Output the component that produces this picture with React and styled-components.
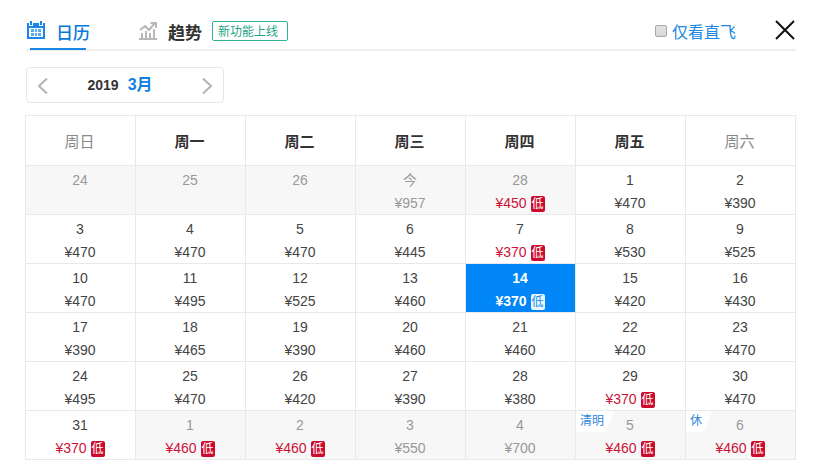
import React, { useState } from "react";
import styled, { createGlobalStyle, css } from "styled-components";

const GlobalStyle = createGlobalStyle`
  *, *::before, *::after { box-sizing: border-box; }
  body {
    margin: 0;
    background: #fff;
    color: #333;
    font-family: "Liberation Sans", "Noto Sans CJK SC", sans-serif;
    font-size: 14px;
  }
  button, input { font: inherit; color: inherit; }
  button { border: 0; padding: 0; background: none; cursor: pointer; }
`;

const Panel = styled.main`
  padding: 13px 25px 16px;
`;

const Header = styled.header`
  display: flex;
  align-items: center;
  height: 38px;
  margin-left: 1px;
  border-bottom: 2px solid #eee;
`;

const Tab = styled.button`
  position: relative;
  display: flex;
  align-items: center;
  gap: 10px;
  height: 38px;
  margin-right: 48px;
  font-size: 17px;
  font-weight: ${(p) => (p.$active ? 500 : 700)};
  color: ${(p) => (p.$active ? "#0a78d8" : "#333")};
  ${(p) =>
    p.$active &&
    css`
      &::after {
        content: "";
        position: absolute;
        left: 4px;
        right: 4px;
        bottom: 0;
        height: 2px;
        background: #1a87e8;
      }
    `}
`;

const NewTag = styled.span`
  height: 20px;
  padding: 0 9px 0 5px;
  border: 1px solid #2fb595;
  border-radius: 2px;
  font-size: 12px;
  line-height: 20px;
  font-weight: 400;
  color: #1fa585;
`;

const DirectOnly = styled.label`
  display: flex;
  align-items: center;
  gap: 5px;
  margin-left: auto;
  font-size: 16px;
  font-weight: 400;
  color: #2088e0;
`;

const Checkbox = styled.input`
  appearance: none;
  width: 12px;
  height: 12px;
  margin: 0;
  border: 1px solid #a8a8a8;
  border-radius: 2px;
  background: linear-gradient(#e2e2e2, #d8d8d8);
  &:checked { background: #0086f6; }
`;

const CloseButton = styled.button`
  display: flex;
  margin: 0 1px 2px 39px;
`;

const MonthPicker = styled.div`
  display: inline-flex;
  align-items: center;
  justify-content: space-between;
  width: 198px;
  height: 36px;
  margin: 16px 0 12px 1px;
  padding: 0 10px;
  border: 1px solid #e8e8e8;
  border-radius: 4px;
`;

const ArrowButton = styled.button`
  display: flex;
  padding-top: 2px;
`;

const MonthTitle = styled.div`
  display: flex;
  align-items: center;
  gap: 9px;
  padding-right: 10px;
  line-height: 20px;
  font-weight: 700;
`;

const Month = styled.span`
  font-size: 16px;
  color: #1080e0;
`;

const Calendar = styled.table`
  width: 100%;
  table-layout: fixed;
  border-collapse: collapse;
`;

const Weekday = styled.th`
  height: 50px;
  padding: 0 2px 1px 0;
  border: 1px solid #e9e9e9;
  font-size: 15px;
  font-weight: ${(p) => (p.$weekend ? 400 : 700)};
  color: ${(p) => (p.$weekend ? "#888" : "#333")};
`;

const Cell = styled.td`
  position: relative;
  padding: 0;
  border: 1px solid #e9e9e9;
  background: ${(p) => (p.$muted ? "#f7f7f7" : "#fff")};
`;

const Day = styled.button`
  display: flex;
  flex-direction: column;
  align-items: center;
  width: 100%;
  height: 48px;
  padding: 3px 1px 0 0;
  line-height: 23px;
  color: ${(p) => (p.$muted ? "#999" : "#444")};
  ${(p) =>
    p.$selected &&
    css`
      background: #0086f6;
      color: #fff;
      font-weight: 700;
    `}
`;

const Price = styled.span`
  display: flex;
  align-items: center;
  gap: 4px;
  height: 22px;
  color: ${(p) => (p.$low && !p.$selected ? "#cc1236" : "inherit")};
`;

const LowBadge = styled.span`
  width: 14px;
  height: 16px;
  margin-top: 1px;
  border-radius: 2px;
  font-size: 12px;
  line-height: 17px;
  font-weight: 400;
  text-align: center;
  background: ${(p) => (p.$selected ? "#e9f5ff" : "#cc0a2c")};
  color: ${(p) => (p.$selected ? "#2090e8" : "#fff")};
`;

const Holiday = styled.span`
  position: absolute;
  top: 0;
  left: 0;
  padding: 0 10px 0 4px;
  font-size: 12px;
  line-height: 21px;
  color: #2f86dc;
  background: #fff;
  clip-path: polygon(0 0, 100% 0, calc(100% - 8px) 100%, 0 100%);
  pointer-events: none;
`;

const CalendarIcon = () => (
  <svg width="20" height="20" viewBox="0 0 20 20" aria-hidden="true">
    <path fill="#1a87e8" d="M4 0h2v4H4zM14 0h2v4h-2z" />
    <path fill="#1a87e8" fillRule="evenodd" d="M1 2h2v3h4V2h6v3h4V2h2v16H1zM3 7v9h14V7z" />
    <path fill="#5aa8ee" d="M5 8h3v3H5zM9 8h2v3H9zM12 8h3v3h-3zM5 12h3v3H5zM9 12h2v3H9zM12 12h3v3h-3z" />
  </svg>
);

const TrendIcon = () => (
  <svg width="20" height="20" viewBox="0 0 20 20" fill="none" stroke="#b8b8b8" aria-hidden="true">
    <path strokeWidth="2" d="M2 9l5-4 4 4 6-7M12.500 2H18v5" />
    <path strokeWidth="2" d="M4 18v-6M8 18v-8M12 18v-6M16 18V8" />
    <path strokeWidth="2" d="M1 18h18" />
  </svg>
);

const Arrow = ({ next }) => (
  <svg width="12" height="18" viewBox="0 0 12 18" fill="none" stroke="#b4b4b4" strokeWidth="2" aria-hidden="true">
    <path d={next ? "M2 1.500l8 7.500-8 7.500" : "M10 1.500L2 9l8 7.500"} />
  </svg>
);

const WEEKDAYS = ["周日", "周一", "周二", "周三", "周四", "周五", "周六"];

const d = (day, price, flags = {}) => ({ day, price, ...flags });
const past = { muted: true };
const low = { low: true };
const pastLow = { muted: true, low: true };

const WEEKS = [
  [d("24", null, past), d("25", null, past), d("26", null, past), d("今", 957, past), d("28", 450, pastLow), d("1", 470), d("2", 390)],
  [d("3", 470), d("4", 470), d("5", 470), d("6", 445), d("7", 370, low), d("8", 530), d("9", 525)],
  [d("10", 470), d("11", 495), d("12", 525), d("13", 460), d("14", 370, low), d("15", 420), d("16", 430)],
  [d("17", 390), d("18", 465), d("19", 390), d("20", 460), d("21", 460), d("22", 420), d("23", 470)],
  [d("24", 495), d("25", 470), d("26", 420), d("27", 390), d("28", 380), d("29", 370, low), d("30", 470)],
  [d("31", 370, low), d("1", 460, pastLow), d("2", 460, pastLow), d("3", 550, past), d("4", 700, past), d("5", 460, { ...pastLow, holiday: "清明" }), d("6", 460, { ...pastLow, holiday: "休" })],
];

export default function App() {
  const [selected, setSelected] = useState("2-4");
  const [tab, setTab] = useState("calendar");

  return (
    <Panel>
      <GlobalStyle />
      <Header>
        <Tab type="button" $active={tab === "calendar"} onClick={() => setTab("calendar")}>
          <CalendarIcon />
          日历
        </Tab>
        <Tab type="button" $active={tab === "trend"} onClick={() => setTab("trend")}>
          <TrendIcon />
          趋势
          <NewTag>新功能上线</NewTag>
        </Tab>
        <DirectOnly>
          <Checkbox type="checkbox" />
          仅看直飞
        </DirectOnly>
        <CloseButton type="button" aria-label="关闭">
          <svg width="20" height="20" viewBox="0 0 20 20" stroke="#111" strokeWidth="2" aria-hidden="true">
            <path d="M1 1l18 18M19 1L1 19" />
          </svg>
        </CloseButton>
      </Header>

      <MonthPicker>
        <ArrowButton type="button" aria-label="上个月"><Arrow /></ArrowButton>
        <MonthTitle>
          <span>2019</span>
          <Month>3月</Month>
        </MonthTitle>
        <ArrowButton type="button" aria-label="下个月"><Arrow next /></ArrowButton>
      </MonthPicker>

      <Calendar>
        <thead>
          <tr>
            {WEEKDAYS.map((name, i) => (
              <Weekday key={name} scope="col" $weekend={i === 0 || i === 6}>{name}</Weekday>
            ))}
          </tr>
        </thead>
        <tbody>
          {WEEKS.map((week, w) => (
            <tr key={w}>
              {week.map((item, i) => {
                const id = `${w}-${i}`;
                const active = id === selected;
                return (
                  <Cell key={id} $muted={item.muted}>
                    <Day type="button" $muted={item.muted} $selected={active} onClick={() => setSelected(id)}>
                      <span>{item.day}</span>
                      {item.price && (
                        <Price $low={item.low} $selected={active}>
                          ¥{item.price}
                          {item.low && <LowBadge $selected={active}>低</LowBadge>}
                        </Price>
                      )}
                    </Day>
                    {item.holiday && <Holiday>{item.holiday}</Holiday>}
                  </Cell>
                );
              })}
            </tr>
          ))}
        </tbody>
      </Calendar>
    </Panel>
  );
}
